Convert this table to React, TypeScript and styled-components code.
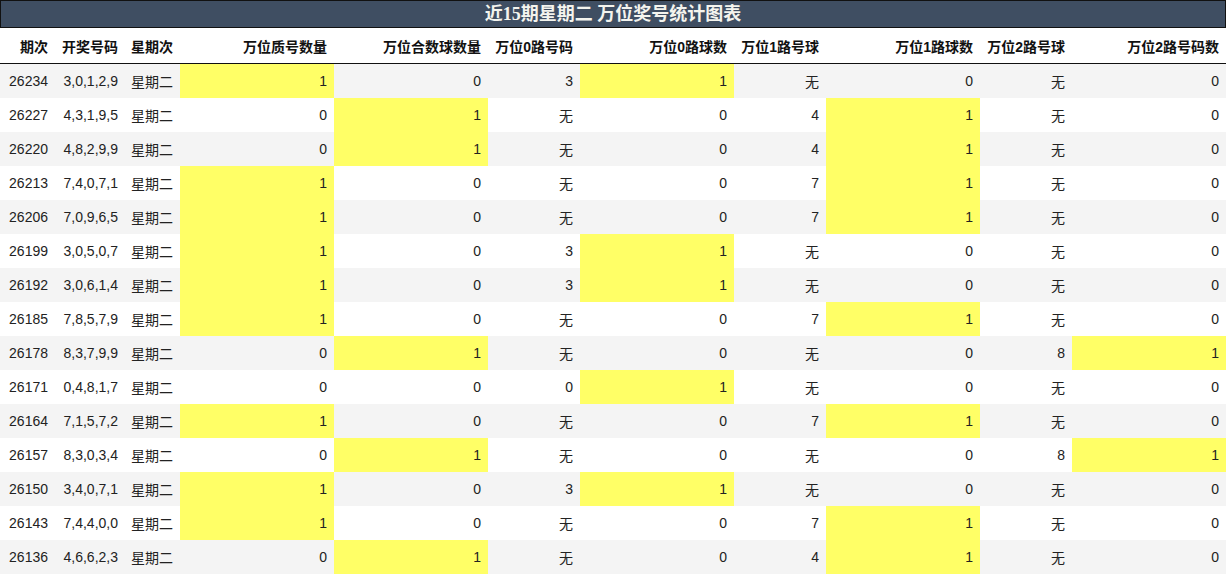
import styled, { createGlobalStyle } from "styled-components";

const GlobalStyle = createGlobalStyle`
  html, body {
    margin: 0;
    padding: 0;
    background: #ffffff;
  }
  body {
    font-family: "Liberation Sans", "Noto Sans CJK SC", sans-serif;
    color: #222222;
  }
`;

const Wrapper = styled.div`
  width: 1226px;
`;

const Title = styled.div`
  height: 26px;
  border: 1px solid #111111;
  background: #3f4e62;
  color: #f4f4ee;
  font-family: "Liberation Serif", "Noto Sans CJK SC", serif;
  font-size: 18px;
  font-weight: bold;
  line-height: 27px;
  text-align: center;
`;

const Table = styled.table`
  width: 1226px;
  border-collapse: collapse;
  table-layout: fixed;
  font-size: 14px;
`;

const HeadCell = styled.th`
  height: 35px;
  padding: 0 7px 0 0;
  text-align: right;
  font-weight: bold;
  color: #111111;
  border-bottom: 1px solid #111111;
  white-space: nowrap;
`;

const Row = styled.tr<{ $odd: boolean }>`
  background: ${(p) => (p.$odd ? "#f4f4f4" : "#ffffff")};
`;

const Cell = styled.td<{ $hit?: boolean }>`
  height: 34px;
  padding: 0 7px 0 0;
  text-align: right;
  white-space: nowrap;
  background: ${(p) => (p.$hit ? "#ffff66" : "transparent")};
`;

const columns = [
  { label: "期次", width: 55 },
  { label: "开奖号码", width: 70 },
  { label: "星期次", width: 55 },
  { label: "万位质号数量", width: 154 },
  { label: "万位合数球数量", width: 154 },
  { label: "万位0路号码", width: 92 },
  { label: "万位0路球数", width: 154 },
  { label: "万位1路号球", width: 92 },
  { label: "万位1路球数", width: 154 },
  { label: "万位2路号球", width: 92 },
  { label: "万位2路号码数", width: 154 },
];

// issue, draw, then: prime, composite, r0 num, r0 count, r1 num, r1 count, r2 num, r2 count
const rows: [string, string, (string | number)[]][] = [
  ["26234", "3,0,1,2,9", [1, 0, "3", 1, "无", 0, "无", 0]],
  ["26227", "4,3,1,9,5", [0, 1, "无", 0, "4", 1, "无", 0]],
  ["26220", "4,8,2,9,9", [0, 1, "无", 0, "4", 1, "无", 0]],
  ["26213", "7,4,0,7,1", [1, 0, "无", 0, "7", 1, "无", 0]],
  ["26206", "7,0,9,6,5", [1, 0, "无", 0, "7", 1, "无", 0]],
  ["26199", "3,0,5,0,7", [1, 0, "3", 1, "无", 0, "无", 0]],
  ["26192", "3,0,6,1,4", [1, 0, "3", 1, "无", 0, "无", 0]],
  ["26185", "7,8,5,7,9", [1, 0, "无", 0, "7", 1, "无", 0]],
  ["26178", "8,3,7,9,9", [0, 1, "无", 0, "无", 0, "8", 1]],
  ["26171", "0,4,8,1,7", [0, 0, "0", 1, "无", 0, "无", 0]],
  ["26164", "7,1,5,7,2", [1, 0, "无", 0, "7", 1, "无", 0]],
  ["26157", "8,3,0,3,4", [0, 1, "无", 0, "无", 0, "8", 1]],
  ["26150", "3,4,0,7,1", [1, 0, "3", 1, "无", 0, "无", 0]],
  ["26143", "7,4,4,0,0", [1, 0, "无", 0, "7", 1, "无", 0]],
  ["26136", "4,6,6,2,3", [0, 1, "无", 0, "4", 1, "无", 0]],
];

export default function App() {
  return (
    <Wrapper>
      <GlobalStyle />
      <Title>近15期星期二 万位奖号统计图表</Title>
      <Table>
        <colgroup>
          {columns.map((c) => (
            <col key={c.label} style={{ width: c.width }} />
          ))}
        </colgroup>
        <thead>
          <tr>
            {columns.map((c) => (
              <HeadCell key={c.label}>{c.label}</HeadCell>
            ))}
          </tr>
        </thead>
        <tbody>
          {rows.map(([issue, draw, stats], i) => (
            <Row key={issue} $odd={i % 2 === 0}>
              <Cell>{issue}</Cell>
              <Cell>{draw}</Cell>
              <Cell>星期二</Cell>
              {stats.map((v, j) => (
                <Cell key={j} $hit={typeof v === "number" && v === 1}>
                  {v}
                </Cell>
              ))}
            </Row>
          ))}
        </tbody>
      </Table>
    </Wrapper>
  );
}
